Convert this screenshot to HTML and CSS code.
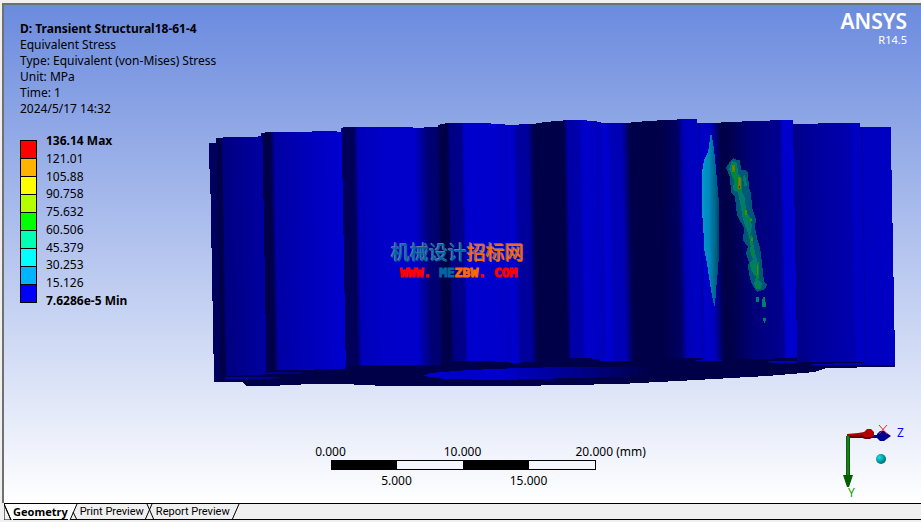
FILE: index.html
```html
<!DOCTYPE html>
<html lang="en">
<head>
<meta charset="utf-8">
<title>Transient Structural</title>
<link rel="stylesheet" href="styles.css">
</head>
<body>
<main class="viewport">
  <header class="head">
    <section class="info">
      <h1>D: Transient Structural18-61-4</h1>
      <p>Equivalent Stress</p>
      <p>Type: Equivalent (von-Mises) Stress</p>
      <p>Unit: MPa</p>
      <p>Time: 1</p>
      <p>2024/5/17 14:32</p>
    </section>
    <div class="brand"><strong>ANSYS</strong><span>R14.5</span></div>
  </header>

  <div class="stage">
    <section class="legend">
      <div class="swatches">
        <i class="c1"></i><i class="c2"></i><i class="c3"></i><i class="c4"></i><i class="c5"></i><i class="c6"></i><i class="c7"></i><i class="c8"></i><i class="c9"></i>
      </div>
      <ul class="values">
        <li><b>136.14 Max</b></li><li>121.01</li><li>105.88</li><li>90.758</li><li>75.632</li><li>60.506</li><li>45.379</li><li>30.253</li><li>15.126</li><li><b>7.6286e-5 Min</b></li>
      </ul>
    </section>
    <svg class="model" viewBox="209 119 686 268">
      <defs>
        <linearGradient id="teeth" gradientUnits="userSpaceOnUse" x1="200" y1="0" x2="900" y2="0" gradientTransform="translate(-2 0) skewX(1)">
          <stop offset="0.0129" stop-color="#00005f"/><stop offset="0.0229" stop-color="#00005f"/>
          <stop offset="0.0229" stop-color="#000048"/><stop offset="0.029" stop-color="#000048"/>
          <stop offset="0.032" stop-color="#000080"/><stop offset="0.0886" stop-color="#0000a2"/>
          <stop offset="0.0886" stop-color="#000048"/><stop offset="0.1" stop-color="#000048"/>
          <stop offset="0.106" stop-color="#0000a4"/><stop offset="0.15" stop-color="#0000b8"/><stop offset="0.202" stop-color="#0000d0"/>
          <stop offset="0.202" stop-color="#000058"/><stop offset="0.219" stop-color="#000058"/>
          <stop offset="0.225" stop-color="#0000b8"/><stop offset="0.26" stop-color="#0000c8"/><stop offset="0.305" stop-color="#0000cc"/>
          <stop offset="0.325" stop-color="#000074"/><stop offset="0.337" stop-color="#000070"/>
          <stop offset="0.342" stop-color="#000048"/><stop offset="0.353" stop-color="#000048"/>
          <stop offset="0.356" stop-color="#000084"/><stop offset="0.373" stop-color="#00008c"/>
          <stop offset="0.377" stop-color="#0000cc"/><stop offset="0.415" stop-color="#0000cc"/><stop offset="0.438" stop-color="#0000c4"/>
          <stop offset="0.44" stop-color="#0000d0"/><stop offset="0.446" stop-color="#0000cc"/>
          <stop offset="0.453" stop-color="#00009c"/><stop offset="0.468" stop-color="#00009c"/>
          <stop offset="0.476" stop-color="#000048"/><stop offset="0.519" stop-color="#000048"/>
          <stop offset="0.525" stop-color="#0000a8"/><stop offset="0.542" stop-color="#0000ac"/>
          <stop offset="0.545" stop-color="#0000cc"/><stop offset="0.573" stop-color="#0000bc"/>
          <stop offset="0.575" stop-color="#0000d0"/><stop offset="0.583" stop-color="#0000cc"/>
          <stop offset="0.586" stop-color="#0000b8"/><stop offset="0.602" stop-color="#0000b4"/>
          <stop offset="0.614" stop-color="#000048"/><stop offset="0.656" stop-color="#000048"/>
          <stop offset="0.682" stop-color="#000064"/>
          <stop offset="0.69" stop-color="#0000b8"/><stop offset="0.71" stop-color="#0000c4"/><stop offset="0.713" stop-color="#0000a8"/>
          <stop offset="0.716" stop-color="#0000cc"/><stop offset="0.729" stop-color="#0000c0"/>
          <stop offset="0.743" stop-color="#000048"/><stop offset="0.753" stop-color="#000048"/>
          <stop offset="0.785" stop-color="#000078"/><stop offset="0.827" stop-color="#000090"/>
          <stop offset="0.832" stop-color="#0000cc"/><stop offset="0.847" stop-color="#0000cc"/>
          <stop offset="0.847" stop-color="#000088"/><stop offset="0.88" stop-color="#00009c"/><stop offset="0.929" stop-color="#0000b0"/>
          <stop offset="0.932" stop-color="#0000c4"/><stop offset="0.943" stop-color="#0000c0"/>
          <stop offset="0.945" stop-color="#0000a8"/><stop offset="0.947" stop-color="#0000c0"/><stop offset="1" stop-color="#0000c4"/>
        </linearGradient>
        <linearGradient id="rim" x1="0" x2="1" y1="0" y2="0">
          <stop offset="0" stop-color="#0000c8"/><stop offset="0.35" stop-color="#0000c8"/><stop offset="0.7" stop-color="#000088"/><stop offset="1" stop-color="#000048"/>
        </linearGradient>
        <linearGradient id="sliver" x1="0" x2="1" y1="0" y2="0">
          <stop offset="0" stop-color="#0000b8"/><stop offset="1" stop-color="#000048"/>
        </linearGradient>
        <linearGradient id="cyan" gradientUnits="userSpaceOnUse" x1="702" x2="720" y1="0" y2="0">
          <stop offset="0" stop-color="#0098d0"/><stop offset="0.4" stop-color="#0088bc"/><stop offset="0.75" stop-color="#006488"/><stop offset="1" stop-color="#003c50"/>
        </linearGradient>
      </defs>
      <g shape-rendering="crispEdges">
        <path fill="url(#teeth)" d="M209 143H216V138H223V137H258V136H261V133H265V132H312V131H337V132H341V128H343V127H413V128H424V127H438V125H440V124H445V123H491V124H505V125H519V124H536V123H542V122H551V121H563V120H587V121H597V122H601V123H631V122H642V121H657V120H677V119H697V123H721V122H742V121H770V120H793V124H818V123H860V127H891V170H892V223H893V277H894V330H895V366H857V368H826L815 372L767 376L696 380L620 384L515 386H385L343 384H311L269 386H246L243 382H214V354H213V301H212V248H211V194H210Z"/>
        <path fill="#000048" d="M221 376L262 375L266 371L274 370H316V369H345V366H359V365H438V366H441V361H495V362H510V363H523V362H536V358H592V359H600V361H632V358H702V361H722V359H797V362H864V361L864 365H895V366H857V368H826L815 372L767 376L696 380L620 384L515 386H385L343 384H311L269 386H246L243 382H220Z"/>
        <path fill="url(#rim)" d="M423 376L430 373L455 371L470 370L520 368L566 367H650V376L575 378L500 380L444 379Z"/>
        <path fill="url(#sliver)" d="M262 374L268 372H304L300 374ZM224 377H282L270 379H226ZM346 367H356L350 369H346Z"/>
        <path fill="#0000b8" d="M695 360H722V361H697ZM766 361H797V363H772ZM810 364H864V363H833V364H895V365H813Z"/>
        <path fill="#000048" d="M880 366H895V367H857V366ZM775 358H797V359H775Z"/>
        <path fill="url(#cyan)" d="M711 132L713 142L715 158L717 180L719 202V255L718 270L716 290L715 306H714L711 290L707 264L704 248L703 218H702V172L704 160L708 152Z"/>
        <path fill="#005878" d="M733 158L737 160H740L741 170H745L748 173L749 188L751 193L752 207L756 220L755 227L757 238L760 247L761 255L763 272L764 282L767 285L765 289L757 292L753 286L750 279L748 267L749 262L746 253L748 247L743 240L744 228L737 215L735 197L731 192L730 177L726 168L730 161Z"/>
        <path fill="#007c6c" d="M732 161L737 163L738 173L742 179V192L745 198L746 211L750 218L752 226L750 236L753 242L755 253L757 260L759 267L758 280L762 284L760 289H756L754 284L756 277L751 270L750 263L753 259L750 251L751 244L748 233L743 220L741 208L738 192L733 190L734 180L729 169ZM745 174L747 186H744L743 176ZM756 297H759V302H756ZM763 297H765L766 307H762V301ZM763 318H766V321H765V323H764Z"/>
        <path fill="#008830" d="M732 163H735L736 173L739 177L741 185L741 192H738L736 184L732 174ZM744 207H746L747 217H744ZM749 218H752L751 223H749ZM751 234L753 238L752 245H750V238ZM751 249H753L754 256H751ZM757 262H759V279H756ZM751 264H753V270H751ZM756 284L759 285V289H756Z"/>
        <path fill="#508800" d="M732 165H735V172H732ZM738 177H741V189H738ZM745 210H747V215H745ZM750 219H752V221H750ZM751 238H753V241H751ZM757 265H758V275H757Z"/>
        <path fill="#b06800" d="M733 167H734V170H733ZM739 179H740V188H739Z"/>
        <path fill="#a01000" d="M739 186H740V188H739Z"/>
      </g>
      <g class="mark">
        <text class="cn" x="391" y="260"><tspan class="teal">机械设计</tspan><tspan class="orange">招标网</tspan></text>
        <text class="url" x="400" y="277" xml:space="preserve"><tspan class="red">WWW. </tspan><tspan class="teal">ME</tspan><tspan class="orange">ZBW</tspan><tspan class="red">. COM</tspan></text>
      </g>
    </svg>
  </div>

  <footer class="foot">
    <div class="scale">
      <div class="ticks"><span>0.000</span><span></span><span>10.000</span><span></span><span class="last">20.000 (mm)</span></div>
      <div class="bar"><i></i><i></i><i></i><i></i></div>
      <div class="ticks"><span></span><span>5.000</span><span></span><span>15.000</span><span></span></div>
    </div>
    <svg class="triad" viewBox="840 422 70 80" width="70" height="80">
      <defs>
        <radialGradient id="ball" cx="0.35" cy="0.35" r="0.7"><stop offset="0" stop-color="#20e0e0"/><stop offset="0.5" stop-color="#00a8b0"/><stop offset="1" stop-color="#006870"/></radialGradient>
        <linearGradient id="stem" x1="0" x2="1" y1="0" y2="0"><stop offset="0" stop-color="#005000"/><stop offset="0.5" stop-color="#209020"/><stop offset="1" stop-color="#004800"/></linearGradient>
      </defs>
      <path fill="#0000a0" d="M849 435H880V438H849Z"/>
      <path fill="#000090" d="M880 431L884 431L891 436L884 441L880 441L877 438V434Z"/>
      <path fill="#b00000" d="M847 434L858 433L864 432L867 429H871L874 432V436L870 438H865L862 436L847 438Z"/>
      <path fill="#700000" d="M847 436L862 435L865 437H873L870 439H865L860 437L847 438Z"/>
      <rect x="846" y="436" width="4" height="40" fill="url(#stem)"/>
      <path fill="#006000" d="M843 475H853L849 487H847Z"/>
      <circle cx="881" cy="459" r="5" fill="url(#ball)"/>
      <path stroke="#f02020" fill="none" d="M879 425L887 434M887 425L879 434"/>
      <text class="axis z" x="897" y="437">Z</text>
      <text class="axis y" x="848" y="497">Y</text>
    </svg>
  </footer>
</main>

<nav class="tabs">
  <svg class="slant first" viewBox="0 0 9 16" width="9" height="16"><path fill="#f0f0f0" d="M0 0V16H7Z"/><path d="M0 0L7 16"/></svg>
  <button class="tab active">Geometry</button>
  <svg class="slant" viewBox="0 0 12 16" width="12" height="16"><path fill="#fff" stroke="none" d="M0 0H9L2 16H0Z"/><path d="M2 16L9 0M5 8L9 16"/></svg>
  <button class="tab">Print Preview</button>
  <svg class="slant" viewBox="0 0 12 16" width="12" height="16"><path d="M1 16L8 0M3 0L10 16"/></svg>
  <button class="tab">Report Preview</button>
  <svg class="slant" viewBox="0 0 12 16" width="12" height="16"><path d="M2 16L9 0"/></svg>
</nav>
</body>
</html>
```
FILE: styles.css
```css
* { box-sizing: border-box; margin: 0; padding: 0; }
body {
  min-height: 100vh;
  display: flex;
  flex-direction: column;
  padding: 3px 0 2px 2px;
  background: #f0f0f0;
  color: #000;
  font: 12px/16px "Noto Sans", sans-serif;
}
.viewport {
  flex: 1;
  display: flex;
  flex-direction: column;
  border-top: 2px solid #707070;
  border-left: 2px solid #707070;
  background: linear-gradient(#6b8bde, #fff);
}
.head { display: flex; justify-content: space-between; padding: 16px 14px 0 16px; height: 114px; }
.info h1 { font-size: 12px; font-weight: 700; }
.brand { display: flex; flex-direction: column; align-items: flex-end; margin-top: -12px; color: #fff; }
.brand strong { font: 600 21px/24px "Noto Sans", sans-serif; }
.brand span { font-size: 11px; line-height: 14px; }
.stage { display: flex; align-items: flex-start; padding: 0 26px 0 16px; }
.legend { display: flex; gap: 9px; width: 189px; padding-top: 14px; }
.swatches { margin-top: 7px; width: 17px; height: 163px; border: 1px solid #000; display: flex; flex-direction: column; }
.swatches i { flex: 1; }
.swatches i + i { border-top: 1px solid #000; }
.c1 { background: #f00; } .c2 { background: #ffb300; } .c3 { background: #ff0; }
.c4 { background: #b3ff00; } .c5 { background: #0f0; } .c6 { background: #00ffb3; }
.c7 { background: #0ff; } .c8 { background: #00b3ff; } .c9 { background: #00f; }
.values { list-style: none; height: 176px; display: flex; flex-direction: column; justify-content: space-between; }
.model { flex: 1; min-width: 0; display: block; }
.cn { font: 500 19px "Noto Sans CJK SC", sans-serif; text-shadow: -1px -1px 0 #7070b0; }
.url { font: 700 13px "DejaVu Sans Mono", monospace; }
.teal { fill: #0068a0; }
.orange { fill: #ff6800; }
.red { fill: #f00; }
.url .red { stroke: #f00; }
.url .teal { stroke: #0068a0; }
.url .orange { stroke: #ff6800; }
.foot { flex: 1; display: grid; grid-template-columns: 1fr auto 1fr; align-items: end; padding: 0 11px 1px 11px; }
.scale { grid-column: 2; padding-bottom: 13px; }
.ticks { display: grid; grid-template-columns: repeat(5, 66px); text-align: center; height: 16px; }
.last { padding-left: 14px; text-align: left; white-space: nowrap; }
.bar { display: grid; grid-template-columns: repeat(4, 1fr); height: 10px; margin: 0 32px 3px 33px; border: 1px solid #000; background: #f4f7fd; }
.bar i:nth-child(odd) { background: #000; }
.triad { justify-self: end; display: block; }
.axis { font: 12px "Noto Sans", sans-serif; }
.z { fill: #00f; }
.y { fill: #00a000; }
.tabs {
  display: flex;
  height: 17px;
  margin-left: 2px;
  border-top: 1px solid #000;
  border-bottom: 1px solid #000;
  background: #f0f0f0;
}
.tab { border: 0; background: none; font: 11px/15px Roboto, sans-serif; color: #000; white-space: nowrap; }
.active { background: #fff; font: 700 11px/15px "Noto Sans", sans-serif; }
.slant { flex: none; stroke: #000; fill: none; }
.first { background: #fff; }
```
